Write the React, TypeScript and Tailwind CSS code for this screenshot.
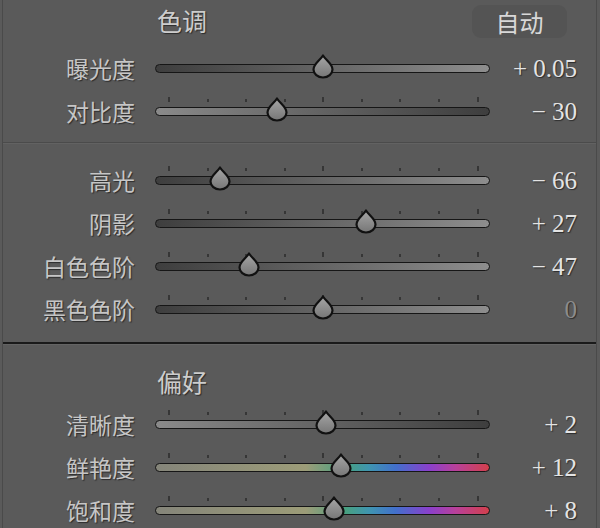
import React from 'react';

type TrackKind = 'up' | 'down' | 'color';

interface SliderRowProps {
  label: string;
  value: string;
  pos: number;
  kind?: TrackKind;
  ticks?: boolean;
  dim?: boolean;
}

const TICKS = [13, 52, 90, 129, 167, 206, 244, 283, 322];

function Thumb({ left }: { left: number }) {
  return (
    <svg
      className="absolute top-[-11px]"
      style={{ left: left - 11 }}
      width="22"
      height="25"
      viewBox="0 0 22 25"
    >
      <defs>
        <linearGradient id="thumbFill" x1="0" y1="0" x2="0" y2="1">
          <stop offset="0" stopColor="#a6a6a6" />
          <stop offset="1" stopColor="#767676" />
        </linearGradient>
      </defs>
      <path
        d="M11 1.5 C 14 6.5, 20.5 10, 20.5 15.5 A 9.5 8 0 0 1 1.5 15.5 C 1.5 10, 8 6.5, 11 1.5 Z"
        fill="url(#thumbFill)"
        stroke="#111111"
        strokeWidth="2.2"
        strokeLinejoin="round"
      />
    </svg>
  );
}

function Track({ pos, kind = 'up', ticks = true }: { pos: number; kind?: TrackKind; ticks?: boolean }) {
  const fill =
    kind === 'color'
      ? 'bg-[linear-gradient(to_right,#85857a_0%,#9c9c78_45%,#48a080_57%,#3f95b0_64%,#4270cc_72%,#8a40cc_82%,#b8409a_90%,#d2404c_100%)]'
      : kind === 'down'
      ? 'bg-linear-to-r from-[#8a8a8a] to-[#3e3e3e]'
      : 'bg-linear-to-r from-[#3e3e3e] to-[#8e8e8e]';
  return (
    <div className={`relative w-[335px] h-[9px] rounded-full border border-[#161616] ${fill}`}>
      {ticks &&
        TICKS.map((x, i) => {
          const tall = i === 0 || i === 4 || i === 8;
          return (
            <div
              key={i}
              className={`absolute w-[2px] bg-[#363636] ${tall ? 'top-[-11px] h-[5px]' : 'top-[-9px] h-[3px]'}`}
              style={{ left: x - 1 }}
            />
          );
        })}
      <Thumb left={pos} />
    </div>
  );
}

function SliderRow({ label, value, pos, kind, ticks, dim }: SliderRowProps) {
  return (
    <div className="flex items-center h-[43px]">
      <div className="w-[132px] text-right text-[23px] leading-none text-[#c6c6c6] [text-shadow:1px_1px_1px_#2c2c2c] [font-family:'Noto_Sans_CJK_SC',sans-serif]">
        {label}
      </div>
      <div className="ml-[20px]">
        <Track pos={pos} kind={kind} ticks={ticks} />
      </div>
      <div
        className={`flex-1 pr-[19px] text-right text-[25px] leading-none [font-family:'Liberation_Serif',serif] [text-shadow:1px_1px_1px_#2c2c2c] ${
          dim ? 'text-[#8c8c8c]' : 'text-[#e4e4e4]'
        }`}
      >
        {value}
      </div>
    </div>
  );
}

function Header({ title, auto }: { title: string; auto?: boolean }) {
  return (
    <div className="flex justify-between h-[47px]">
      <div className="pl-[154px] pt-[8px] text-[25px] leading-none text-[#cdcdcd] [text-shadow:1px_1px_1px_#2c2c2c] [font-family:'Noto_Sans_CJK_SC',sans-serif]">
        {title}
      </div>
      {auto && (
        <div className="mt-[5px] mr-[29px] w-[95px] h-[33px] rounded-[9px] bg-[#545454] flex items-center justify-center text-[24px] leading-none text-[#d8d8d8] [font-family:'Noto_Sans_CJK_SC',sans-serif]">
          自动
        </div>
      )}
    </div>
  );
}

export default function App() {
  return (
    <div className="w-[600px] h-[528px] overflow-hidden bg-[#5a5a5a] pl-[2px] pr-[3px]">
      <div className="h-full border-x border-[#4a4a4a]">
        {/* 色调 */}
        <div className="pb-[9px] border-b border-[#4b4b4b]">
          <Header title="色调" auto />
          <SliderRow label="曝光度" value="+ 0.05" pos={167} ticks={false} />
          <SliderRow label="对比度" value="− 30" pos={121} kind="down" />
        </div>

        <div className="pt-[15px] pb-[11px] border-t border-[#626262] border-b-2 border-b-[#1a1a1a]">
          <SliderRow label="高光" value="− 66" pos={64} />
          <SliderRow label="阴影" value="+ 27" pos={210} />
          <SliderRow label="白色色阶" value="− 47" pos={93} />
          <SliderRow label="黑色色阶" value="0" pos={167} dim />
        </div>

        {/* 偏好 */}
        <div className="pt-[12px] border-t border-[#646464]">
          <div className="h-[46px]">
            <div className="pl-[154px] pt-[12px] text-[25px] leading-none text-[#cdcdcd] [text-shadow:1px_1px_1px_#2c2c2c] [font-family:'Noto_Sans_CJK_SC',sans-serif]">
              偏好
            </div>
          </div>
          <SliderRow label="清晰度" value="+ 2" pos={170} kind="down" />
          <SliderRow label="鲜艳度" value="+ 12" pos={185} kind="color" />
          <SliderRow label="饱和度" value="+ 8" pos={178} kind="color" />
        </div>
      </div>
    </div>
  );
}
